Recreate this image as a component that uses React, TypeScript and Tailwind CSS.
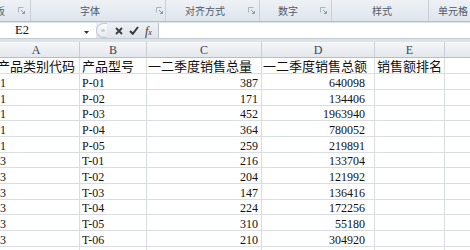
import React from 'react';

const serif = "font-['Liberation_Serif','Noto_Sans_CJK_SC',serif]";
const cjk = "font-['Noto_Sans_CJK_SC','Noto_Sans',sans-serif]";

type Row = { h: string; a: string; b: string; c: string; d: string };

const rows: Row[] = [
  { h: 'h-[16px]', a: '1', b: 'P-01', c: '387', d: '640098' },
  { h: 'h-[16px]', a: '1', b: 'P-02', c: '171', d: '134406' },
  { h: 'h-[15px]', a: '1', b: 'P-03', c: '452', d: '1963940' },
  { h: 'h-[16px]', a: '1', b: 'P-04', c: '364', d: '780052' },
  { h: 'h-[16px]', a: '1', b: 'P-05', c: '259', d: '219891' },
  { h: 'h-[15px]', a: '3', b: 'T-01', c: '216', d: '133704' },
  { h: 'h-[16px]', a: '3', b: 'T-02', c: '204', d: '121992' },
  { h: 'h-[16px]', a: '3', b: 'T-03', c: '147', d: '136416' },
  { h: 'h-[15px]', a: '3', b: 'T-04', c: '224', d: '172256' },
  { h: 'h-[16px]', a: '3', b: 'T-05', c: '310', d: '55180' },
  { h: 'h-[16px]', a: '3', b: 'T-06', c: '210', d: '304920' },
  { h: 'h-[16px]', a: '', b: '', c: '', d: '' },
];

const Launcher = () => (
  <svg width="7" height="7" viewBox="0 0 7 7" className="shrink-0">
    <path d="M0.5 0.5H5.5" stroke="#a9b3be" strokeWidth="1" />
    <path d="M0.5 0.5V5.5" stroke="#a9b3be" strokeWidth="1" />
    <path d="M3 3L6.5 6.5M6.5 4V6.5H4" stroke="#8e99a6" strokeWidth="1" fill="none" />
  </svg>
);

const colHeads = [
  { w: 'w-[87px] ml-[-7px]', t: 'A' },
  { w: 'w-[67px]', t: 'B' },
  { w: 'w-[115px]', t: 'C' },
  { w: 'w-[113px]', t: 'D' },
  { w: 'w-[70px]', t: 'E' },
  { w: 'w-[40px]', t: '' },
];

export default function App() {
  return (
    <div className="w-[470px] h-[250px] overflow-hidden bg-white text-[#111]">
      {/* ribbon group labels */}
      <div className={`h-[22px] flex bg-gradient-to-b from-[#eef2f6] to-[#dfe5ec] border-b border-[#b4bdc8] text-[10px] text-[#4f5b69] ${cjk}`}>
        <div className="w-[31px] shrink-0 flex items-center overflow-hidden border-r border-[#c8cfd7]">
          <span className="ml-[-25px] whitespace-nowrap">剪贴板</span>
          <span className="ml-[13px]"><Launcher /></span>
        </div>
        <div className="w-[135px] shrink-0 flex items-center border-r border-[#c8cfd7]">
          <span className="pl-[49px]">字体</span>
          <span className="ml-auto mr-[2px]"><Launcher /></span>
        </div>
        <div className="w-[94px] shrink-0 flex items-center border-r border-[#c8cfd7]">
          <span className="pl-[19px]">对齐方式</span>
          <span className="ml-auto mr-[4px]"><Launcher /></span>
        </div>
        <div className="w-[72px] shrink-0 flex items-center border-r border-[#c8cfd7]">
          <span className="pl-[18px]">数字</span>
          <span className="ml-auto mr-[4px]"><Launcher /></span>
        </div>
        <div className="w-[97px] shrink-0 flex items-center border-r border-[#c8cfd7]">
          <span className="pl-[40px]">样式</span>
        </div>
        <div className="flex-1 flex items-center">
          <span className="pl-[9px] whitespace-nowrap">单元格</span>
        </div>
      </div>

      {/* formula bar */}
      <div className="h-[20px] flex flex-col bg-[#dde3e9] pt-[1px]">
        <div className="h-[16px] flex border-b border-[#c4cbd3]">
          <div className="w-[96px] shrink-0 bg-white flex items-center">
            <span className={`pl-[15px] text-[12.5px] leading-none ${serif}`}>E2</span>
            <svg width="5" height="3" viewBox="0 0 5 3" className="ml-auto mr-[7px] mt-[3px]">
              <path d="M0 0H5L2.5 3Z" fill="#333" />
            </svg>
          </div>
          <div className="w-[62px] shrink-0 flex items-center bg-gradient-to-b from-[#eef1f5] to-[#e0e5eb]">
            <div className="w-[11px] h-[15px] rounded-l-full border border-r-0 border-[#c2c9d1] bg-gradient-to-b from-[#fbfcfd] to-[#e6eaef] flex items-center justify-center">
              <div className="w-[4px] h-[3px] rounded-full bg-[#c9cfd6] ml-[2px]" />
            </div>
            <svg width="8" height="8" viewBox="0 0 8 8" className="ml-[8px]">
              <path d="M1 1L7 7M7 1L1 7" stroke="#3a3a3a" strokeWidth="1.8" />
            </svg>
            <svg width="10" height="9" viewBox="0 0 10 9" className="ml-[6px]">
              <path d="M1 5L3.8 7.8L9 1" stroke="#3a3a3a" strokeWidth="2" fill="none" />
            </svg>
            <span className={`ml-[6px] italic text-[12px] leading-none text-[#333] ${serif}`}>
              f<span className="text-[8px]">x</span>
            </span>
          </div>
          <div className="flex-1 bg-white border-l border-[#b9c2cc]" />
        </div>
      </div>

      {/* column headers */}
      <div className="h-[16px] flex overflow-hidden bg-gradient-to-b from-[#f5f7f9] to-[#e3e7ec] border-b border-[#b7bec7]">
        {colHeads.map((c, i) => (
          <div
            key={i}
            className={`${c.w} shrink-0 border-r border-[#c9cfd6] flex items-center justify-center text-[12px] text-[#3b4553] ${serif}`}
          >
            {c.t}
          </div>
        ))}
      </div>

      {/* title row */}
      <div className={`h-[16px] flex border-b border-[#dadee3] text-[13px] leading-[14px] ${cjk}`}>
        <div className="w-[87px] ml-[-7px] shrink-0 border-r border-[#dadee3] flex items-end pl-[4px] whitespace-nowrap overflow-hidden">产品类别代码</div>
        <div className="w-[67px] shrink-0 border-r border-[#dadee3] flex items-end pl-[2px] whitespace-nowrap">产品型号</div>
        <div className="w-[115px] shrink-0 border-r border-[#dadee3] flex items-end pl-[1px] whitespace-nowrap">一二季度销售总量</div>
        <div className="w-[113px] shrink-0 border-r border-[#dadee3] flex items-end pl-[1px] whitespace-nowrap">一二季度销售总额</div>
        <div className="w-[70px] shrink-0 border-r border-[#dadee3] flex items-end pl-[2px] whitespace-nowrap">销售额排名</div>
        <div className="w-[40px] shrink-0 border-r border-[#dadee3]" />
      </div>

      {/* data rows */}
      {rows.map((r, i) => (
        <div key={i} className={`${r.h} flex border-b border-[#dadee3] text-[12px] leading-[11px] ${serif}`}>
          <div className="w-[87px] ml-[-7px] shrink-0 border-r border-[#dadee3] flex items-end pl-[7px]">{r.a}</div>
          <div className="w-[67px] shrink-0 border-r border-[#dadee3] flex items-end pl-[2px]">{r.b}</div>
          <div className="w-[115px] shrink-0 border-r border-[#dadee3] flex items-end justify-end pr-[3px]">{r.c}</div>
          <div className="w-[113px] shrink-0 border-r border-[#dadee3] flex items-end justify-end pr-[9px]">{r.d}</div>
          <div className="w-[70px] shrink-0 border-r border-[#dadee3]" />
          <div className="w-[40px] shrink-0 border-r border-[#dadee3]" />
        </div>
      ))}
    </div>
  );
}
